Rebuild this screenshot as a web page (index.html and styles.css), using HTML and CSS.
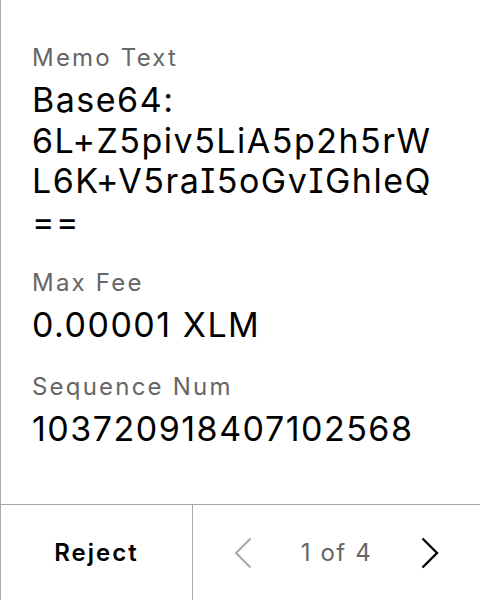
FILE: index.html
```html
<!DOCTYPE html>
<html lang="en">
<head>
<meta charset="utf-8">
<title>Review transaction</title>
<link rel="stylesheet" href="styles.css">
</head>
<body>
<div class="screen">
  <main class="content">
    <div class="field">
      <div class="label">Memo Text</div>
      <div class="value">Base64:<br>6L+Z5piv5LiA5p2h5rW<br>L6K+V5raI5oGvIGhleQ<br>==</div>
    </div>
    <div class="field">
      <div class="label">Max Fee</div>
      <div class="value">0.00001 XLM</div>
    </div>
    <div class="field">
      <div class="label">Sequence Num</div>
      <div class="value">103720918407102568</div>
    </div>
  </main>
  <footer class="footer">
    <div class="reject">Reject</div>
    <div class="pager">
      <span class="nav">
        <svg class="chev chev-off" width="18" height="32" viewBox="0 0 18 32"><polyline points="16.5,1.5 2,16 16.5,30.5" fill="none" stroke="currentColor" stroke-width="2"/></svg>
      </span>
      <span class="count">1 of 4</span>
      <span class="nav">
        <svg class="chev" width="18" height="32" viewBox="0 0 18 32"><polyline points="1.5,1.5 16,16 1.5,30.5" fill="none" stroke="currentColor" stroke-width="2.4"/></svg>
      </span>
    </div>
  </footer>
</div>
</body>
</html>
```
FILE: styles.css
```css
* { box-sizing: border-box; }
html, body { margin: 0; padding: 0; background: #fff; }
body {
  width: 480px;
  height: 600px;
  font-family: Inter, "Noto Sans", sans-serif;
  font-feature-settings: "cv08";
  color: #000;
}
.screen {
  display: flex;
  flex-direction: column;
  height: 600px;
  border-left: 1px solid #a8a8a8;
}
.content {
  flex: 1;
  padding: 42px 8px 0 31px;
  display: flex;
  flex-direction: column;
  gap: 25px;
}
.field {
  display: flex;
  flex-direction: column;
  gap: 6px;
}
.label {
  font-size: 24px;
  line-height: 32px;
  letter-spacing: 2.2px;
  color: #666;
}
.value {
  font-size: 34px;
  line-height: 40.5px;
  letter-spacing: 1.5px;
  color: #000;
}
.footer {
  height: 96px;
  flex: none;
  border-top: 1px solid #a8a8a8;
  display: grid;
  grid-template-columns: 192px 1fr;
}
.reject {
  border-right: 1px solid #a8a8a8;
  display: flex;
  align-items: center;
  justify-content: center;
  font-size: 24px;
  font-weight: 600;
  letter-spacing: 2px;
}
.pager {
  display: flex;
  align-items: center;
  justify-content: space-between;
  padding: 0 26px;
}
.nav {
  width: 48px;
  display: flex;
  justify-content: center;
  align-items: center;
}
.chev { display: block; color: #000; }
.chev-off { color: #a8a8a8; }
.count {
  font-size: 24px;
  letter-spacing: 1.6px;
  color: #666;
}
```
